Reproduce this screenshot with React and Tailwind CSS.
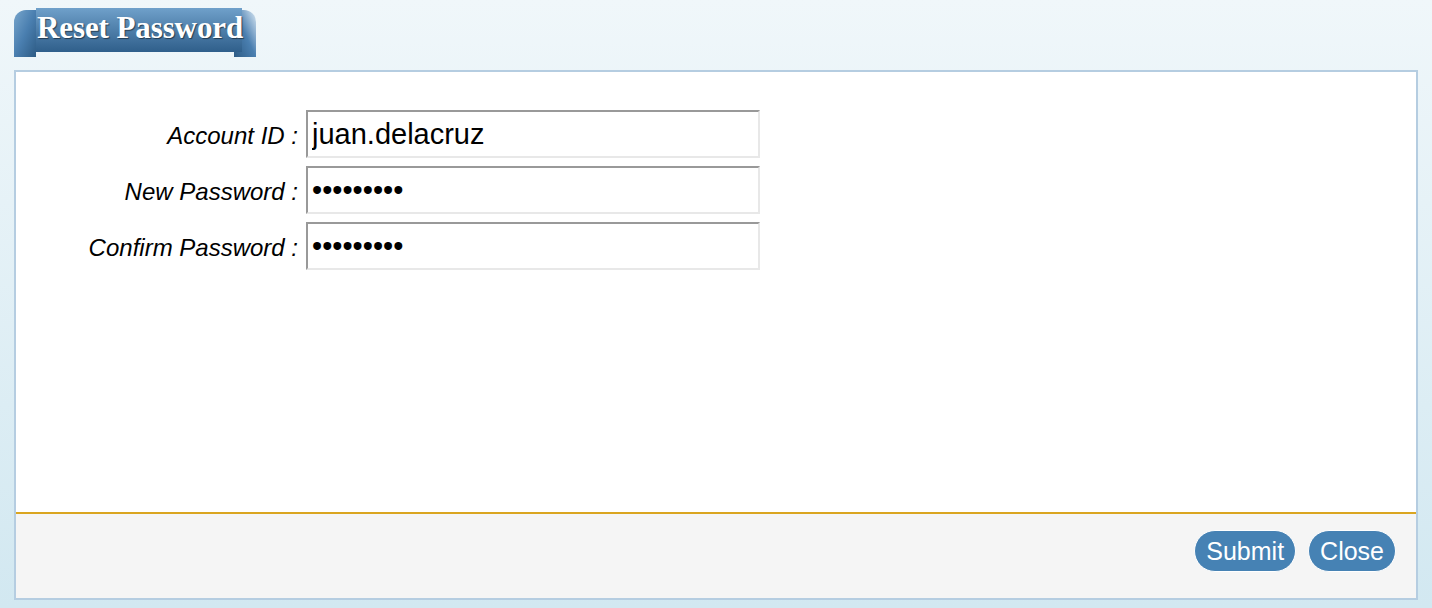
export default function App() {
  const rows = [
    { label: "Account ID :", value: "juan.delacruz", type: "text" },
    { label: "New Password :", value: "123456789", type: "password" },
    { label: "Confirm Password :", value: "123456789", type: "password" },
  ];

  return (
    <div className="w-[1432px] h-[608px] bg-gradient-to-b from-[#f0f7fa] to-[#d2e8f1] px-[14px] pt-[8px] font-['Liberation_Sans',Arial,sans-serif] overflow-hidden">
      {/* tab */}
      <div className="flex items-start h-[62px]">
        <div className="w-[22px] h-[47px] mt-[2px] rounded-tl-[12px] bg-gradient-to-br from-[#78a6cc] via-[#4a7fb0] to-[#2e5c85]" />
        <div className="relative z-10 w-[206px] h-[44px] bg-gradient-to-b from-[#6fa0ca] to-[#2f5f8b] flex items-center pl-[1px]">
          <span className="text-white font-bold text-[31px] leading-none font-['Liberation_Serif','Times_New_Roman',serif] [text-shadow:1px_1px_1px_rgba(0,0,0,0.5)] whitespace-nowrap -mt-[6px] tracking-[-0.1px]">
            Reset Password
          </span>
        </div>
        <div className="w-[22px] h-[47px] mt-[2px] -ml-[8px] rounded-tr-[12px] bg-gradient-to-bl from-[#dbe9f3] via-[#4a7fb0] to-[#2e5c85]" />
      </div>

      {/* panel */}
      <div className="w-[1404px] h-[530px] border-2 border-[#b5cde1] bg-white flex flex-col">
        <div className="flex-1 pt-[38px]">
          <div className="flex flex-col gap-[8px]">
            {rows.map((r) => (
              <div key={r.label} className="flex items-center">
                <label className="w-[282px] mt-[3px] text-right italic text-[24px] leading-none text-black whitespace-nowrap">
                  {r.label}
                </label>
                <input
                  type={r.type}
                  defaultValue={r.value}
                  readOnly
                  className="ml-[8px] w-[454px] h-[48px] border-2 border-t-[#999] border-l-[#999] border-r-[#e8e8e8] border-b-[#e8e8e8] px-[4px] text-[29px] text-black outline-none font-['Liberation_Sans',Arial,sans-serif]"
                />
              </div>
            ))}
          </div>
        </div>
        <div className="h-[86px] border-t-2 border-[#daa520] bg-[#f5f5f5] flex items-start justify-end gap-[12px] pt-[16px] pr-[20px]">
          <button className="h-[42px] px-[11px] rounded-full bg-[#4682b4] border border-white text-white text-[25px] leading-none font-['Liberation_Sans',Arial,sans-serif]">
            Submit
          </button>
          <button className="h-[42px] px-[11px] rounded-full bg-[#4682b4] border border-white text-white text-[25px] leading-none font-['Liberation_Sans',Arial,sans-serif]">
            Close
          </button>
        </div>
      </div>
    </div>
  );
}
